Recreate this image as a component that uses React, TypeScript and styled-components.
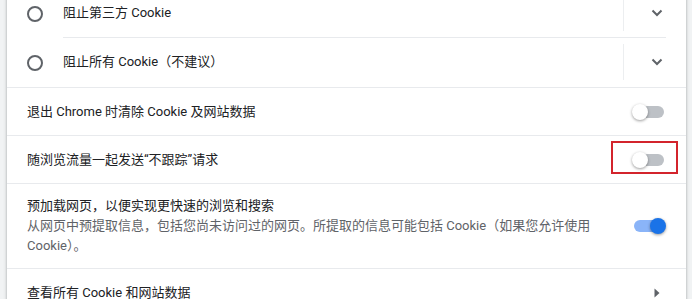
import React from "react";
import styled, { createGlobalStyle } from "styled-components";

const GlobalStyle = createGlobalStyle`
  html, body {
    margin: 0;
    padding: 0;
    height: 100%;
    overflow: hidden;
    background: #f1f3f4;
  }
  body {
    font-family: Roboto, "Noto Sans CJK SC", sans-serif;
    font-size: 13px;
    color: #202124;
  }
`;

const Page = styled.div`
  padding: 0 6px 0 7px;
`;

const Card = styled.div`
  margin-top: -11px;
  background: #fff;
  box-shadow: 0 1px 2px rgba(60, 64, 67, 0.3), 0 1px 3px 1px rgba(60, 64, 67, 0.15);
`;

const RadioRow = styled.div`
  display: flex;
  align-items: stretch;
  padding: 0 20px;
`;

const RadioCircle = styled.div`
  flex-shrink: 0;
  align-self: center;
  width: 12px;
  height: 12px;
  border: 2px solid #5f6368;
  border-radius: 50%;
`;

const RadioContent = styled.div<{ $divider?: boolean }>`
  flex: 1;
  display: flex;
  align-items: center;
  margin-left: 20px;
  min-height: 48px;
  border-bottom: 1px solid ${(p) => (p.$divider ? "#e8eaed" : "transparent")};
`;

const Label = styled.div`
  flex: 1;
  line-height: 20px;
`;

const Separator = styled.div`
  width: 1px;
  height: 36px;
  background: #eceef0;
  margin-right: 24px;
`;

const IconBox = styled.div`
  width: 18px;
  display: flex;
  align-items: center;
  justify-content: center;
  color: #5f6368;
`;

const Row = styled.div<{ $tall?: boolean }>`
  display: flex;
  align-items: center;
  min-height: 48px;
  padding: ${(p) => (p.$tall ? "12px 20px" : "0 20px")};
  box-sizing: border-box;
  border-top: 1px solid #e8eaed;
`;

const TextBlock = styled.div`
  flex: 1;
  line-height: 20px;
  padding-right: 20px;
`;

const Secondary = styled.div`
  color: #5f6368;
`;

const ToggleWrap = styled.div`
  position: relative;
  flex-shrink: 0;
  width: 34px;
  height: 16px;
`;

const Track = styled.div<{ $on?: boolean }>`
  position: absolute;
  left: 2px;
  right: 2px;
  top: 2px;
  height: 12px;
  border-radius: 6px;
  background: ${(p) => (p.$on ? "#8ab4f8" : "#bdc1c6")};
`;

const Knob = styled.div<{ $on?: boolean }>`
  position: absolute;
  top: 0;
  left: ${(p) => (p.$on ? "18px" : "0")};
  width: 16px;
  height: 16px;
  border-radius: 50%;
  background: ${(p) => (p.$on ? "#1a73e8" : "#fff")};
  box-shadow: 0 1px 3px rgba(0, 0, 0, 0.4);
`;

const Highlight = styled.div`
  position: absolute;
  left: -21px;
  top: -11px;
  width: 63px;
  height: 29px;
  border: 2px solid #d3242c;
`;

const Chevron = () => (
  <svg width="12" height="8" viewBox="0 0 12 8">
    <polyline points="1.5,1.5 6,6 10.5,1.5" fill="none" stroke="currentColor" strokeWidth="2" />
  </svg>
);

const ArrowRight = () => (
  <svg width="6" height="10" viewBox="0 0 6 10">
    <polygon points="0.5,0.5 5.5,5 0.5,9.5" fill="currentColor" />
  </svg>
);

const Toggle = ({ on, marked }: { on?: boolean; marked?: boolean }) => (
  <ToggleWrap>
    <Track $on={on} />
    <Knob $on={on} />
    {marked && <Highlight />}
  </ToggleWrap>
);

export default function App() {
  return (
    <Page>
      <GlobalStyle />
      <Card>
        <RadioRow>
          <RadioCircle />
          <RadioContent $divider>
            <Label>阻止第三方 Cookie</Label>
            <Separator />
            <IconBox>
              <Chevron />
            </IconBox>
          </RadioContent>
        </RadioRow>
        <RadioRow>
          <RadioCircle />
          <RadioContent>
            <Label>阻止所有 Cookie（不建议）</Label>
            <Separator />
            <IconBox>
              <Chevron />
            </IconBox>
          </RadioContent>
        </RadioRow>
        <Row>
          <TextBlock>退出 Chrome 时清除 Cookie 及网站数据</TextBlock>
          <Toggle />
        </Row>
        <Row>
          <TextBlock>随浏览流量一起发送“不跟踪”请求</TextBlock>
          <Toggle marked />
        </Row>
        <Row $tall>
          <TextBlock>
            <div>预加载网页，以便实现更快速的浏览和搜索</div>
            <Secondary>
              从网页中预提取信息，包括您尚未访问过的网页。所提取的信息可能包括 Cookie（如果您允许使用 Cookie）。
            </Secondary>
          </TextBlock>
          <Toggle on />
        </Row>
        <Row>
          <TextBlock>查看所有 Cookie 和网站数据</TextBlock>
          <IconBox>
            <ArrowRight />
          </IconBox>
        </Row>
      </Card>
    </Page>
  );
}
